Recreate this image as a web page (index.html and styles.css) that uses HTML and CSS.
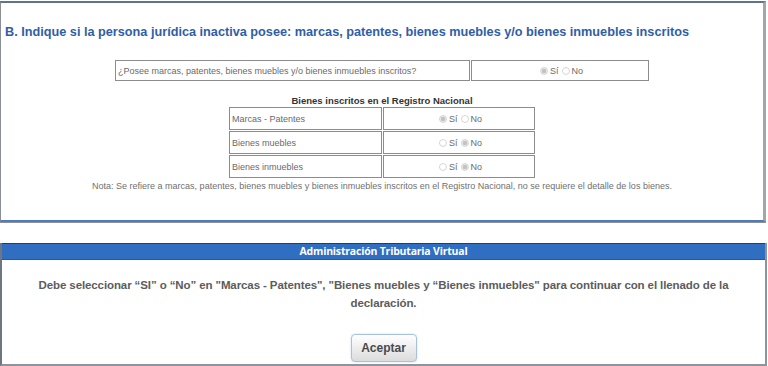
FILE: index.html
```html
<!DOCTYPE html>
<html lang="es">
<head>
    <meta charset="UTF-8">
    <title>Declaración - Persona jurídica inactiva</title>
    <link rel="stylesheet" href="styles.css">
</head>
<body>
    <div class="panel">
        <h2 class="section-title">B. Indique si la persona jurídica inactiva posee: marcas, patentes, bienes muebles y/o bienes inmuebles inscritos</h2>

        <table class="grid grid-main">
            <tr>
                <td class="label">¿Posee marcas, patentes, bienes muebles y/o bienes inmuebles inscritos?</td>
                <td class="choice">
                    <span class="radio on"></span>Sí<span class="radio"></span>No
                </td>
            </tr>
        </table>

        <div class="caption">Bienes inscritos en el Registro Nacional</div>
        <table class="grid grid-items">
            <tr>
                <td class="label">Marcas - Patentes</td>
                <td class="choice"><span class="radio on"></span>Sí<span class="radio"></span>No</td>
            </tr>
            <tr>
                <td class="label">Bienes muebles</td>
                <td class="choice"><span class="radio"></span>Sí<span class="radio on"></span>No</td>
            </tr>
            <tr>
                <td class="label">Bienes inmuebles</td>
                <td class="choice"><span class="radio"></span>Sí<span class="radio on"></span>No</td>
            </tr>
        </table>
        <p class="note">Nota: Se refiere a marcas, patentes, bienes muebles y bienes inmuebles inscritos en el Registro Nacional, no se requiere el detalle de los bienes.</p>
    </div>

    <div class="dialog">
        <div class="dialog-header">Administración Tributaria Virtual</div>
        <div class="dialog-body">
            <p class="message">Debe seleccionar “SI” o “No” en "Marcas - Patentes", "Bienes muebles y “Bienes inmuebles" para continuar con el llenado de la declaración.</p>
            <button class="btn">Aceptar</button>
        </div>
    </div>
</body>
</html>
```

FILE: styles.css
```css
body {
    margin: 0;
    background: #ffffff;
    font-family: 'Liberation Sans', Arial, sans-serif;
}
.panel {
    box-sizing: border-box;
    width: 766px;
    height: 221px;
    margin-top: 1px;
    border-top: 2px solid #5d7391;
    border-left: 1px solid #8a8f96;
    border-right: 3px solid #a3a6aa;
    border-bottom: 2px solid #4c7cbc;
    box-shadow: 0 1px 0 #8d9299;
    padding-top: 22px;
}
.section-title {
    margin: 0 0 0 4px;
    font-size: 12.7px;
    font-weight: bold;
    color: #2f5ea8;
}
.grid {
    border-collapse: separate;
    border-spacing: 1px;
    margin: 0 auto;
}
.grid td {
    border: 1px solid #8c8c8c;
    font-size: 9px;
    color: #6a6a6a;
    padding: 0 2px;
}
.grid-main {
    margin-top: 20px;
}
.grid-main td {
    height: 19px;
}
.grid-main .label {
    width: 349px;
}
.grid-main .choice {
    width: 172px;
}
.grid-items .label {
    width: 147px;
}
.grid-items .choice {
    width: 146px;
}
.grid-items td {
    height: 21px;
}
.choice {
    text-align: center;
}
.radio {
    display: inline-block;
    width: 6px;
    height: 6px;
    margin: 0 2px 0 3px;
    border: 1px solid #d6d6d6;
    border-radius: 50%;
    background: #ffffff;
    vertical-align: -1px;
}
.radio.on {
    background: radial-gradient(circle, #c2c2c2 45%, #e8e8e8 60%);
}
.caption {
    margin-top: 13px;
    margin-bottom: 0;
    text-align: center;
    font-size: 9.5px;
    font-weight: bold;
    color: #333333;
}
.note {
    margin: 2px 0 0;
    text-align: center;
    font-size: 9px;
    color: #707070;
}
.dialog {
    box-sizing: border-box;
    width: 767px;
    margin-top: 21px;
    border-left: 2px solid #6f7680;
    border-right: 2px solid #8e949c;
    border-bottom: 2px solid #8e949c;
    height: 123px;
}
.dialog-header {
    height: 15px;
    line-height: 15px;
    border-top: 1px solid #1d3f6e;
    border-bottom: 1px solid #27589a;
    background: #2f6ec0;
    color: #ffffff;
    text-align: center;
    font-family: 'Open Sans', sans-serif;
    font-size: 10.5px;
    font-weight: bold;
    letter-spacing: -0.2px;
}
.dialog-body {
    text-align: center;
    padding-top: 16px;
}
.message {
    margin: 0 auto;
    width: 720px;
    font-size: 11.5px;
    letter-spacing: -0.1px;
    line-height: 18px;
    font-weight: bold;
    color: #5c5c5c;
}
.btn {
    margin-top: 22px;
    width: 66px;
    height: 28px;
    border: 1px solid #a9c1e0;
    border-radius: 4px;
    background: linear-gradient(#ffffff, #dcdcdc);
    box-shadow: 0 0 2px #c6d6ea;
    font-family: 'Liberation Sans', Arial, sans-serif;
    font-size: 12px;
    font-weight: bold;
    color: #4a4a4a;
}
```
